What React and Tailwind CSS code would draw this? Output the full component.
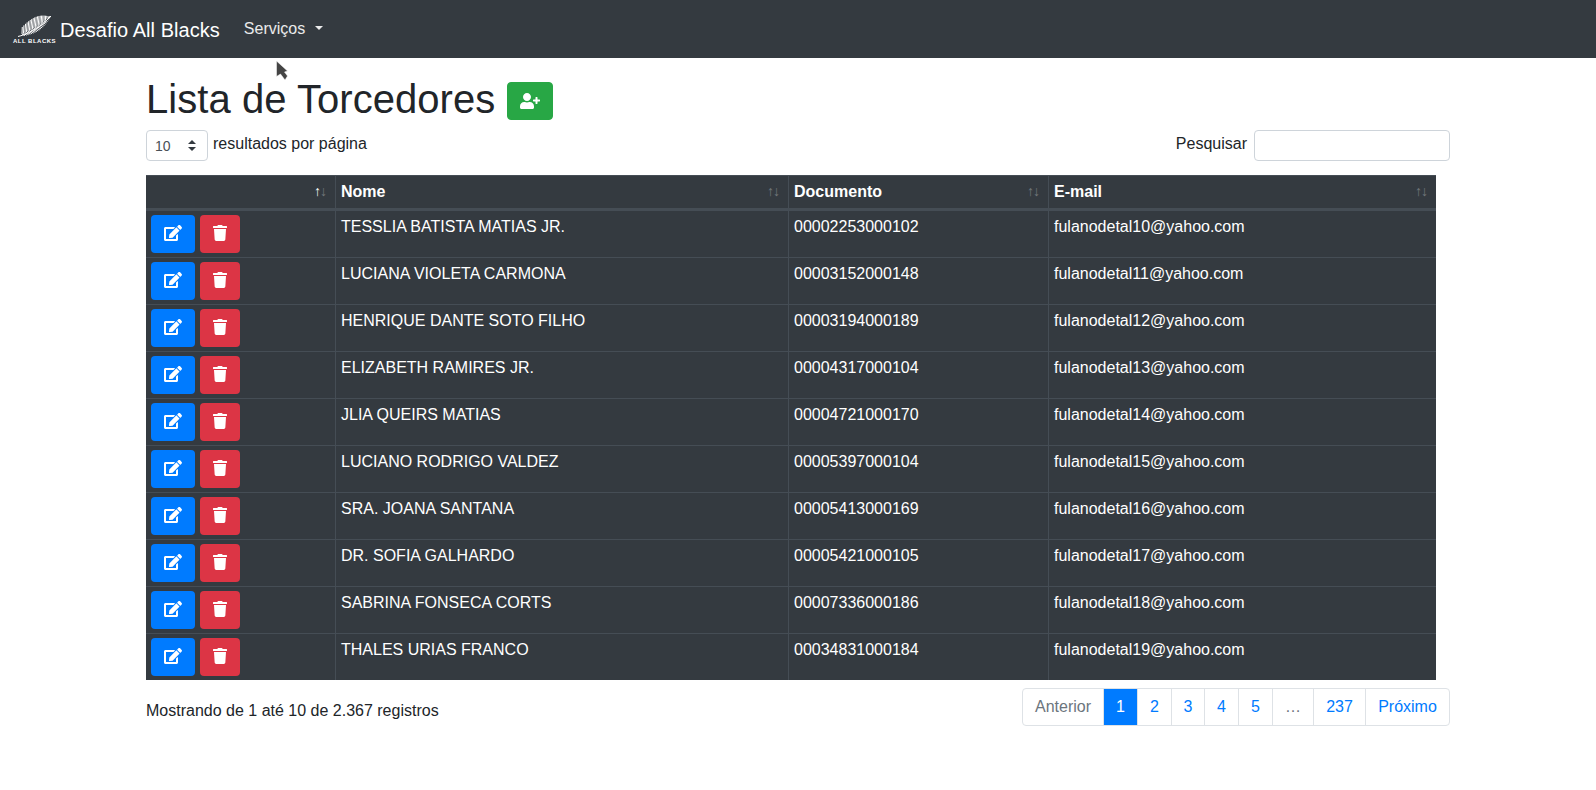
import { FaEdit, FaTrash, FaUserPlus } from "react-icons/fa";

const ROWS = [
  ["TESSLIA BATISTA MATIAS JR.", "00002253000102", "fulanodetal10@yahoo.com"],
  ["LUCIANA VIOLETA CARMONA", "00003152000148", "fulanodetal11@yahoo.com"],
  ["HENRIQUE DANTE SOTO FILHO", "00003194000189", "fulanodetal12@yahoo.com"],
  ["ELIZABETH RAMIRES JR.", "00004317000104", "fulanodetal13@yahoo.com"],
  ["JLIA QUEIRS MATIAS", "00004721000170", "fulanodetal14@yahoo.com"],
  ["LUCIANO RODRIGO VALDEZ", "00005397000104", "fulanodetal15@yahoo.com"],
  ["SRA. JOANA SANTANA", "00005413000169", "fulanodetal16@yahoo.com"],
  ["DR. SOFIA GALHARDO", "00005421000105", "fulanodetal17@yahoo.com"],
  ["SABRINA FONSECA CORTS", "00007336000186", "fulanodetal18@yahoo.com"],
  ["THALES URIAS FRANCO", "00034831000184", "fulanodetal19@yahoo.com"],
];

const PAGES = [
  { label: "Anterior", tone: "text-[#6c757d]", width: "w-[82px]", edge: "rounded-l" },
  { label: "1", tone: "relative bg-[#007bff] border-[#007bff] text-white", width: "w-[35px]" },
  { label: "2", tone: "text-[#007bff]", width: "w-[35px]" },
  { label: "3", tone: "text-[#007bff]", width: "w-[34px]" },
  { label: "4", tone: "text-[#007bff]", width: "w-[35px]" },
  { label: "5", tone: "text-[#007bff]", width: "w-[35px]" },
  { label: "…", tone: "text-[#6c757d]", width: "w-[42px]" },
  { label: "237", tone: "text-[#007bff]", width: "w-[53px]" },
  { label: "Próximo", tone: "text-[#007bff]", width: "w-[85px]", edge: "rounded-r" },
];

// fern leaf: short strokes fanning out from a curved stem
function FernLogo() {
  const fronds = Array.from({ length: 20 }, (_, i) => {
    const t = i / 19;
    const x = 7 + t * 28;
    const y = 20 - t * 17 + Math.sin(t * Math.PI) * 1.5;
    const size = Math.sin(Math.PI * (0.22 + t * 0.76));
    return { x, y, size };
  });
  return (
    <div className="flex w-[41px] flex-col items-center">
      <svg width="40" height="25" viewBox="0 0 40 25" fill="none" stroke="#fff">
        <path d="M3 22.5C10 21 24 15 36 2" strokeWidth="1" />
        {fronds.map((f, i) => (
          <g key={i} strokeWidth="1">
            <line x1={f.x} y1={f.y} x2={f.x - 1 + f.size * 2} y2={f.y - f.size * 11} />
            <line x1={f.x} y1={f.y} x2={f.x + f.size * 4.5} y2={f.y + f.size * 2.5} />
          </g>
        ))}
      </svg>
      <span className="-mt-px whitespace-nowrap text-[6px] font-bold leading-[6px] tracking-[0.5px] text-white">
        ALL BLACKS
      </span>
    </div>
  );
}

function SortArrows({ active }) {
  return (
    <>
      <span className={`absolute right-[14px] bottom-[6px] text-[14px] font-normal leading-[21px] ${active ? "opacity-100" : "opacity-30"}`}>↑</span>
      <span className="absolute right-[8px] bottom-[6px] text-[14px] font-normal leading-[21px] opacity-30">↓</span>
    </>
  );
}

export default function App() {
  return (
    <div className="relative min-h-[790px] bg-white text-[16px] leading-6 text-[#212529] [font-family:'Liberation_Sans',Arial,sans-serif]">
      <nav className="flex h-[58px] items-center bg-[#343a40] pl-[14px] text-white">
        <FernLogo />
        <span className="ml-[5px] mt-[2px] text-[20px] leading-[30px] tracking-[0.05px]">Desafio All Blacks</span>
        <span className="ml-[24px] flex items-center text-white/90">
          Serviços
          <span className="mb-[3px] ml-[10px] h-0 w-0 border-x-[4.8px] border-t-[4.8px] border-x-transparent border-t-white/90" />
        </span>
      </nav>

      <svg className="absolute left-[275px] top-[60px]" width="14" height="21" viewBox="0 0 14 21">
        <path d="M1.5 1L1.5 16.5L5.5 14L10 20L12.5 16L9.5 12L12.5 11Z" fill="#444" stroke="#fff" strokeWidth="0.5" />
      </svg>

      <main className="mx-auto w-[1304px]">
        <div className="flex items-center pt-[17px]">
          <h1 className="text-[40px] font-normal leading-[48px] tracking-[0.05px]">Lista de Torcedores</h1>
          <button className="ml-[12px] mt-[4px] flex h-[38px] w-[46px] items-center justify-center rounded border border-[#28a745] bg-[#28a745] text-white">
            <FaUserPlus className="h-4 w-5" />
          </button>
        </div>

        <div className="mt-[7px] flex items-start justify-between">
          <div className="flex items-start">
            <div className="flex h-[31px] w-[62px] items-center justify-between rounded border border-[#ced4da] bg-white pl-[8px] pr-[11px] text-[14px] text-[#495057]">
              10
              <svg width="8" height="11" viewBox="0 0 8 11" fill="#343a40">
                <path d="M4 0L8 4H0Z" />
                <path d="M4 11L0 7H8Z" />
              </svg>
            </div>
            <span className="ml-[5px] mt-[2px]">resultados por página</span>
          </div>
          <div className="flex items-center">
            <span className="pb-[4px]">Pesquisar</span>
            <input className="ml-[7px] h-[31px] w-[196px] rounded border border-[#ced4da] bg-white" />
          </div>
        </div>

        <table className="mt-[14px] w-[1290px] table-fixed border-separate border-spacing-0 bg-[#343a40] text-white">
          <colgroup>
            <col className="w-[189px]" />
            <col className="w-[453px]" />
            <col className="w-[260px]" />
            <col className="w-[388px]" />
          </colgroup>
          <thead>
            <tr className="h-[36px]">
              <th className="relative border-t border-b-[3px] border-[#454d55] p-0"><SortArrows active /></th>
              {["Nome", "Documento", "E-mail"].map((title) => (
                <th key={title} className="relative border-t border-b-[3px] border-l border-[#454d55] px-[5px] pb-[4px] pt-[4px] text-left font-bold">
                  {title}
                  <SortArrows />
                </th>
              ))}
            </tr>
          </thead>
          <tbody>
            {ROWS.map(([name, doc, email], i) => (
              <tr key={doc}>
                <td className={`px-[5px] py-[4px] align-top ${i ? "border-t border-[#454d55]" : ""}`}>
                  <div className="flex gap-[5px]">
                    <button className="flex h-[38px] w-[44px] items-center justify-center rounded bg-[#007bff] pb-[2px] text-white">
                      <FaEdit className="h-4 w-[18px]" />
                    </button>
                    <button className="flex h-[38px] w-[40px] items-center justify-center rounded bg-[#dc3545] pb-[2px] text-white">
                      <FaTrash className="h-4 w-[14px]" />
                    </button>
                  </div>
                </td>
                {[name, doc, email].map((text) => (
                  <td key={text} className={`border-l border-[#454d55] px-[5px] py-[4px] align-top ${i ? "border-t" : ""}`}>
                    {text}
                  </td>
                ))}
              </tr>
            ))}
          </tbody>
        </table>

        <div className="mt-[8px] flex items-start justify-between">
          <span className="mt-[11px]">Mostrando de 1 até 10 de 2.367 registros</span>
          <div className="flex">
            {PAGES.map((page, i) => (
              <span
                key={page.label}
                className={`flex h-[38px] items-center justify-center border border-[#dee2e6] ${i ? "-ml-px" : ""} ${page.width} ${page.tone} ${page.edge || ""}`}
              >
                {page.label}
              </span>
            ))}
          </div>
        </div>
      </main>
    </div>
  );
}
